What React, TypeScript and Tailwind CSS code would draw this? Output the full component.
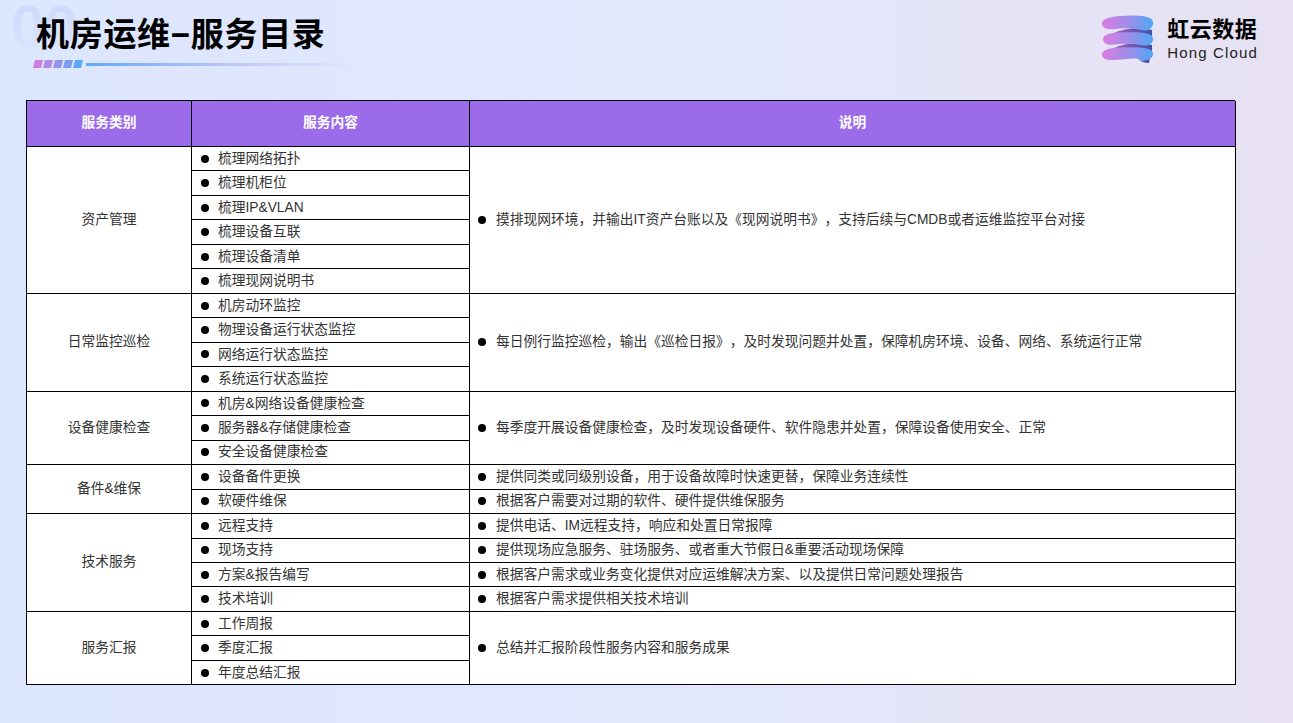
const FONT = "font-['Liberation_Sans','Noto_Sans_CJK_SC',sans-serif]";

type Group = { cat: string; rows: string[]; notes: string[] };

const groups: Group[] = [
  {
    cat: "资产管理",
    rows: ["梳理网络拓扑", "梳理机柜位", "梳理IP&VLAN", "梳理设备互联", "梳理设备清单", "梳理现网说明书"],
    notes: ["摸排现网环境，并输出IT资产台账以及《现网说明书》，支持后续与CMDB或者运维监控平台对接"],
  },
  {
    cat: "日常监控巡检",
    rows: ["机房动环监控", "物理设备运行状态监控", "网络运行状态监控", "系统运行状态监控"],
    notes: ["每日例行监控巡检，输出《巡检日报》，及时发现问题并处置，保障机房环境、设备、网络、系统运行正常"],
  },
  {
    cat: "设备健康检查",
    rows: ["机房&网络设备健康检查", "服务器&存储健康检查", "安全设备健康检查"],
    notes: ["每季度开展设备健康检查，及时发现设备硬件、软件隐患并处置，保障设备使用安全、正常"],
  },
  {
    cat: "备件&维保",
    rows: ["设备备件更换", "软硬件维保"],
    notes: ["提供同类或同级别设备，用于设备故障时快速更替，保障业务连续性", "根据客户需要对过期的软件、硬件提供维保服务"],
  },
  {
    cat: "技术服务",
    rows: ["远程支持", "现场支持", "方案&报告编写", "技术培训"],
    notes: [
      "提供电话、IM远程支持，响应和处置日常报障",
      "提供现场应急服务、驻场服务、或者重大节假日&重要活动现场保障",
      "根据客户需求或业务变化提供对应运维解决方案、以及提供日常问题处理报告",
      "根据客户需求提供相关技术培训",
    ],
  },
  {
    cat: "服务汇报",
    rows: ["工作周报", "季度汇报", "年度总结汇报"],
    notes: ["总结并汇报阶段性服务内容和服务成果"],
  },
];

function Bullet({ text, pad }: { text: string; pad: string }) {
  return (
    <div className={`flex items-center ${pad} text-[13.75px] leading-none text-[#333333] whitespace-nowrap [text-spacing-trim:space-all]`}>
      <span className="w-2 h-2 shrink-0 rounded-full bg-black" />
      <span>{text}</span>
    </div>
  );
}

function Logo() {
  return (
    <svg width="62" height="58" viewBox="0 0 62 58" className="shrink-0">
      <defs>
        <linearGradient id="rb" x1="0" x2="1" y1="0" y2="0">
          <stop offset="0" stopColor="#dc7ce2" />
          <stop offset="0.5" stopColor="#a08ce8" />
          <stop offset="1" stopColor="#4fa8f6" />
        </linearGradient>
        <linearGradient id="dk" x1="0" x2="1" y1="0" y2="0">
          <stop offset="0" stopColor="#a062c4" />
          <stop offset="1" stopColor="#3f4fa2" />
        </linearGradient>
      </defs>
      <path d="M17 23 C27 18 42 17 55 20 L55 28 C44 24.500 30 23.500 17 23 Z" fill="url(#dk)" />
      <path d="M17 38 C27 33 42 32 55 35 L55 43 C44 39.500 30 38.500 17 38 Z" fill="url(#dk)" />
      <path d="M42 50 L53 47 L52 53 C48 53 45 52 42 50 Z" fill="#4a4aa5" />
      <path
        d="M5 13.500 C5 9 12 7 22 6 C34 5 48 5 53 8 C57 10 57 15 54 18 C51 21 48 21 44 20 C36 18 26 18 18 19 C10 20 5 18 5 13.500 Z"
        fill="url(#rb)"
      />
      <path
        d="M6 29 C6 25 12 23 22 22.500 C34 22 48 22 53 24.500 C57 26.500 57 31 54 33.500 C51 36 48 36 44 35 C36 33.500 26 33.500 18 34.500 C11 35.500 6 33.500 6 29 Z"
        fill="url(#rb)"
      />
      <path
        d="M5 44.500 C5 40 12 38 22 37.500 C34 37 48 37 53 39.500 C57 41.500 57 46 54 48 C51 50.500 47 51 43 51 C43 49 40 48.500 36 48.500 C26 49 20 50 15 50 C9 50 5 48.500 5 44.500 Z"
        fill="url(#rb)"
      />
    </svg>
  );
}

export default function App() {
  let line = 2;
  return (
    <div className={`relative w-[1293px] h-[723px] overflow-hidden bg-gradient-to-r from-[#dce6ff] via-[#e2e8fc] to-[#e7e1f2] ${FONT}`}>
      <div className="absolute left-[11px] top-[-3px] text-[60px] leading-[60px] font-bold pb-[2px] bg-gradient-to-b from-[#ccd7fb] to-[#dde6fe] bg-clip-text text-transparent">
        00
      </div>
      <header className="relative flex justify-between h-[100px] pl-[34px] pr-[35px]">
        <div className="pt-[14px]">
          <h1 className="text-[33px] leading-[42px] font-bold text-black whitespace-nowrap pl-[2px] tracking-[0.7px]">
            机房运维−服务目录
          </h1>
          <div className="flex items-center gap-[4px] mt-[4px]">
            <div className="flex gap-[2px]">
              {["#cf7de3", "#b389e6", "#9893ea", "#7d9df0", "#5aa8f7"].map((c) => (
                <span key={c} className="w-[8px] h-[8px] skew-x-[-14deg]" style={{ backgroundColor: c }} />
              ))}
            </div>
            <div className="w-[264px] h-[3px] bg-gradient-to-r from-[#5fa8f8] via-[#b9c2f8] to-transparent" />
          </div>
        </div>
        <div className="flex items-start gap-[8px] pt-[10px]">
          <Logo />
          <div className="flex flex-col pt-[7px] text-black">
            <span className="text-[22px] leading-[26px] font-bold tracking-[0.5px] whitespace-nowrap">虹云数据</span>
            <span className="text-[15px] leading-[20px] text-[#222222] whitespace-nowrap tracking-[1.15px]">Hong Cloud</span>
          </div>
        </div>
      </header>

      <div className="grid ml-[26px] w-[1209px] grid-cols-[165px_278px_766px] grid-rows-[46px_repeat(22,24.470px)] border-t border-l border-black">
        {["服务类别", "服务内容", "说明"].map((h) => (
          <div
            key={h}
            className="flex items-center justify-center bg-[#9b6bea] border-r border-b border-black text-white text-[13.75px] font-bold pb-[1px]"
          >
            {h}
          </div>
        ))}
        {groups.map((g) => {
          const start = line;
          const n = g.rows.length;
          line += n;
          const single = g.notes.length === 1;
          return [
            <div
              key={g.cat}
              className="flex items-center justify-center bg-white border-r border-b border-black text-[13.75px] text-[#333333]"
              style={{ gridColumn: 1, gridRow: `${start} / span ${n}` }}
            >
              {g.cat}
            </div>,
            ...g.rows.map((r, i) => (
              <div
                key={r}
                className="flex items-center bg-white border-r border-b border-black"
                style={{ gridColumn: 2, gridRow: start + i }}
              >
                <Bullet text={r} pad="pl-[9px] gap-[9px]" />
              </div>
            )),
            ...g.notes.map((t, i) => (
              <div
                key={t}
                className="flex items-center bg-white border-r border-b border-black"
                style={{ gridColumn: 3, gridRow: single ? `${start} / span ${n}` : start + i }}
              >
                <Bullet text={t} pad="pl-[8px] gap-[10px]" />
              </div>
            )),
          ];
        })}
      </div>
    </div>
  );
}
